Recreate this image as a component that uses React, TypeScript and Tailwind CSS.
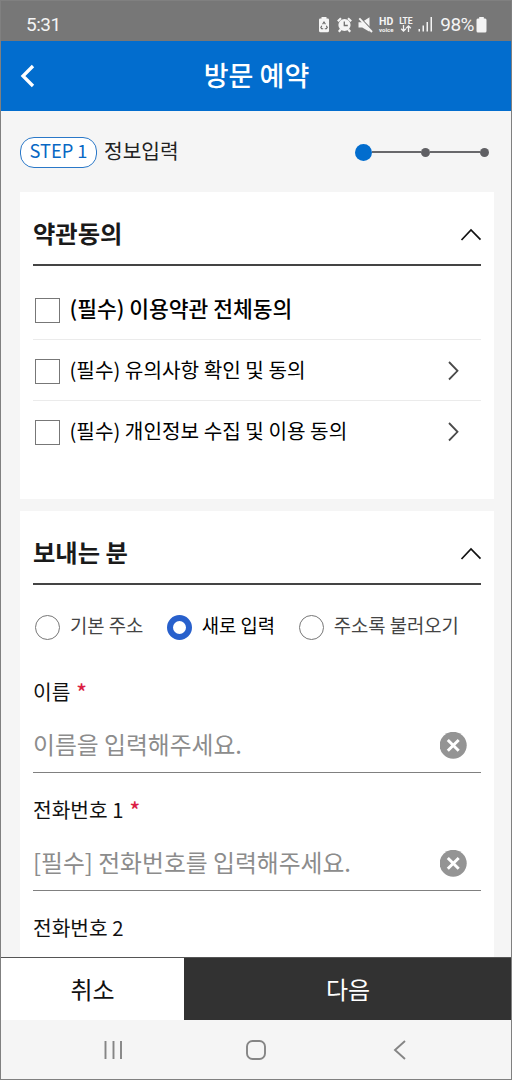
import type { ReactNode } from "react";

function ChevronUp() {
  return (
    <svg className="-mr-px mt-[2px] h-[14px] w-[22px]" viewBox="0 0 22 14" fill="none" stroke="#111" strokeWidth="1.7">
      <path d="M1.500 12 11 2 20.500 11.700" />
    </svg>
  );
}

function ChevronRight() {
  return (
    <svg className="mb-[2px] mr-[21px] block h-[20px] w-[14px]" viewBox="0 0 14 20" fill="none" stroke="#4a4a4a" strokeWidth="1.8">
      <path d="M3 1 11.500 9.800 3 18.500" />
    </svg>
  );
}

function ClearIcon() {
  return (
    <svg className="mr-[14px] size-[27px]" viewBox="0 0 27 27">
      <circle cx="13.200" cy="13.300" r="13.500" fill="#949494" />
      <path d="M7.800 8 18.700 18.700M18.700 8 7.800 18.700" stroke="#fff" strokeWidth="3" />
    </svg>
  );
}

function StatusBar() {
  return (
    <div className="flex h-[40px] shrink-0 items-center bg-[#777777] pl-[25px] pr-[24px] pt-[7px] font-['Roboto',sans-serif] text-[#f4f4f4]">
      <span className="text-[19px] leading-[24px] tracking-[-0.5px]">5:31</span>
      <div className="ml-auto flex items-center">
        <svg className="mr-[7px] h-[16px] w-[12px]" viewBox="0 0 12 16">
          <path d="M3.500 0h5v1.500h1.200q1.300 0 1.300 1.300v11q0 1.500-1.500 1.500h-7Q1 15.300 1 13.800v-11q0-1.300 1.300-1.300h1.200z" fill="#f4f4f4" />
          <path d="M4.600 7.200 6 5l1.400 2.200M8.300 8.700l1 1.700-1 1.300H6.800M5.200 11.700H3.600l-.8-1.300 1-1.700" fill="none" stroke="#666" strokeWidth="1.100" />
        </svg>
        <svg className="mr-[6px] h-[16px] w-[15px]" viewBox="0 0 15 16">
          <circle cx="7.500" cy="8" r="6.100" fill="#f4f4f4" />
          <path d="M.8 4.300 4 1.300M14.200 4.300 11 1.300M3.700 12.500 1.800 14.700M11.300 12.500l1.900 2.200" stroke="#f4f4f4" strokeWidth="2.200" />
          <path d="M7.300 4.500v4h3.500" fill="none" stroke="#707070" strokeWidth="1.300" />
        </svg>
        <svg className="mr-[5px] h-[16px] w-[15px]" viewBox="0 0 15 16">
          <path d="M.5 5.300h3.300L11.500.3v14.400L4.200 10.500H.5z" fill="#f4f4f4" />
          <path d="M2.300.9 14.800 13.900" stroke="#777" strokeWidth="1.500" />
          <path d="M1.300 1.400 14 15" stroke="#f4f4f4" strokeWidth="1.900" />
        </svg>
        <div className="mr-[4px] flex w-[16px] flex-col items-center">
          <span className="text-[10.500px] font-bold leading-[9px]">HD</span>
          <span className="text-[6px] font-bold leading-[7px]">voice</span>
        </div>
        <div className="mr-[5px] flex w-[15px] flex-col items-center">
          <span className="text-[8.500px] font-bold leading-[8px] tracking-[-0.200px]">LTE</span>
          <svg className="h-[7px] w-[12px]" viewBox="0 0 12 7" fill="none" stroke="#f4f4f4" strokeWidth="1.300">
            <path d="M3.500 0v6M1.200 3.800l2.300 2.300 2.300-2.300M8.500 7V1M6.200 3.200 8.500.9l2.300 2.300" />
          </svg>
        </div>
        <svg className="mr-[7px] h-[15px] w-[15px]" viewBox="0 0 15 15" fill="#f4f4f4">
          <path d="M.5 12H2v2.500H.5zM4.500 8.500H6v6H4.500zM8.500 5H10v9.500H8.500zM12.500 0H14v14.500h-1.500z" />
        </svg>
        <span className="mr-[2px] text-[19px] leading-[24px] tracking-[-0.500px]">98%</span>
        <svg className="h-[16px] w-[11px]" viewBox="0 0 11 16">
          <path d="M3.200 0h4.600v1.500h1.300q1.400 0 1.400 1.500v11q0 1.500-1.500 1.500H2Q.5 15.500.5 14V3q0-1.500 1.400-1.500h1.300z" fill="#f4f4f4" />
        </svg>
      </div>
    </div>
  );
}

function CardHeader({ title }: { title: string }) {
  return (
    <div className="flex h-[74px] items-center justify-between border-b-2 border-[#444] pt-[11px]">
      <h2 className="pb-[2px] text-[24.300px] font-bold leading-[32px] text-[#1a1a1a]">{title}</h2>
      <ChevronUp />
    </div>
  );
}

function Agreement({ children, strong, link }: { children: ReactNode; strong?: boolean; link?: boolean }) {
  return (
    <div className="flex h-full items-center pl-[2px] text-black">
      <span className="size-[25px] shrink-0 border border-[#777] bg-white" />
      <span
        className={
          strong
            ? "ml-[9.500px] pb-[5px] text-[21.500px] font-medium leading-[30px]"
            : "ml-[9.500px] pb-[4px] text-[20.200px] leading-[30px]"
        }
      >
        {children}
      </span>
      {link && (
        <span className="ml-auto">
          <ChevronRight />
        </span>
      )}
    </div>
  );
}

function Radio({ label, checked }: { label: string; checked?: boolean }) {
  return (
    <div className="flex items-center">
      <span
        className={
          checked
            ? "size-[25px] shrink-0 rounded-full border-[6px] border-[#2860cc] bg-white"
            : "size-[25px] shrink-0 rounded-full border border-[#777] bg-white"
        }
      />
      <span
        className={
          checked
            ? "ml-[10px] pb-[4px] text-[18.800px] leading-[28px] text-black"
            : "ml-[10px] pb-[4px] text-[18.800px] leading-[28px] text-[#444]"
        }
      >
        {label}
      </span>
    </div>
  );
}

function Label({ text, required }: { text: string; required?: boolean }) {
  return (
    <div className="flex h-[30px] items-center text-[20.300px] leading-[30px] text-[#111]">
      {text}
      {required && <span className="ml-[6px] text-[22px] font-medium text-[#dc1f45]">*</span>}
    </div>
  );
}

function Field({ placeholder }: { placeholder: string }) {
  return (
    <div className="flex h-full items-center justify-between border-b border-[#808080] pt-[13px]">
      <span className="pb-[4px] text-[23.800px] leading-[34px] text-[#8c8c8c]">{placeholder}</span>
      <ClearIcon />
    </div>
  );
}

export default function App() {
  return (
    <div className="flex h-[1080px] w-[512px] flex-col overflow-hidden border border-[#808080] bg-[#f5f5f5] font-['Noto_Sans_CJK_KR',sans-serif]">
      <StatusBar />
      <header className="grid h-[70px] shrink-0 grid-cols-[60px_1fr_60px] items-center bg-[#026dce] text-white">
        <svg className="ml-[18px] h-[24px] w-[18px]" viewBox="0 0 18 24" fill="none" stroke="#fff" strokeWidth="3.300">
          <path d="M14 2 4 12l10 10" />
        </svg>
        <h1 className="pb-[3px] pl-px text-center text-[27px] font-medium leading-[36px]">방문 예약</h1>
      </header>

      <div className="flex h-[81px] shrink-0 items-center pl-[19px] pr-[22px] pt-px">
        <span className="flex h-[31px] w-[77px] items-center justify-center rounded-[14px] border border-[#2a78c8] bg-white pb-[4px] text-[18.300px] leading-[28px] text-[#0868c4]">
          STEP 1
        </span>
        <span className="ml-[7px] pb-[4px] text-[20.300px] leading-[30px] text-[#222]">정보입력</span>
        <div className="ml-auto flex items-center">
          <span className="size-[17px] rounded-full bg-[#026dce]" />
          <span className="h-[2px] w-[49px] bg-[#68686b]" />
          <span className="size-[9px] rounded-full bg-[#606064]" />
          <span className="h-[2px] w-[50px] bg-[#68686b]" />
          <span className="size-[9px] rounded-full bg-[#606064]" />
        </div>
      </div>

      <main className="flex min-h-0 flex-1 flex-col gap-[12px] overflow-hidden pl-[19px] pr-[17px]">
        <section className="h-[307px] shrink-0 bg-white px-[13px]">
          <CardHeader title="약관동의" />
          <div className="h-[74px] border-b border-[#ebebeb] pt-[15px]">
            <Agreement strong>(필수) 이용약관 전체동의</Agreement>
          </div>
          <div className="h-[61px] border-b border-[#ebebeb] pt-[3px]">
            <Agreement link>(필수) 유의사항 확인 및 동의</Agreement>
          </div>
          <div className="h-[61px] pt-[2px]">
            <Agreement link>(필수) 개인정보 수집 및 이용 동의</Agreement>
          </div>
        </section>

        <section className="h-[460px] shrink-0 bg-white px-[13px]">
          <CardHeader title="보내는 분" />
          <div className="flex h-[84px] items-center gap-[23.500px] pl-[2px]">
            <Radio label="기본 주소" />
            <Radio label="새로 입력" checked />
            <Radio label="주소록 불러오기" />
          </div>
          <div className="pt-[7px]">
            <Label text="이름" required />
          </div>
          <div className="h-[67px]">
            <Field placeholder="이름을 입력해주세요." />
          </div>
          <div className="pt-[21px]">
            <Label text="전화번호 1" required />
          </div>
          <div className="h-[67px]">
            <Field placeholder="[필수] 전화번호를 입력해주세요." />
          </div>
          <div className="pt-[21px]">
            <Label text="전화번호 2" />
          </div>
        </section>
      </main>

      <footer className="flex h-[63px] shrink-0 border-t border-[#555] text-[24px] leading-[34px]">
        <button className="flex w-[183px] items-center justify-center bg-white pb-px text-[#111]">취소</button>
        <button className="flex flex-1 items-center justify-center bg-[#323232] pb-px pl-px text-white">다음</button>
      </footer>

      <nav className="flex h-[59px] shrink-0 items-center pl-[103px] pr-[105px]">
        <div className="flex w-full items-center justify-between text-[#858585]">
          <svg className="h-[20px] w-[20px]" viewBox="0 0 20 20" fill="none" stroke="currentColor" strokeWidth="1.900">
            <path d="M1.500 1v18M9.500 1v18M17 1v18" />
          </svg>
          <svg className="mr-[4px] h-[20px] w-[20px]" viewBox="0 0 20 20" fill="none" stroke="currentColor" strokeWidth="1.900">
            <rect x="1" y="1" width="18" height="18" rx="5.500" />
          </svg>
          <svg className="h-[20px] w-[14px]" viewBox="0 0 14 20" fill="none" stroke="currentColor" strokeWidth="1.900">
            <path d="M13 1 3 10l10 9" />
          </svg>
        </div>
      </nav>
    </div>
  );
}
